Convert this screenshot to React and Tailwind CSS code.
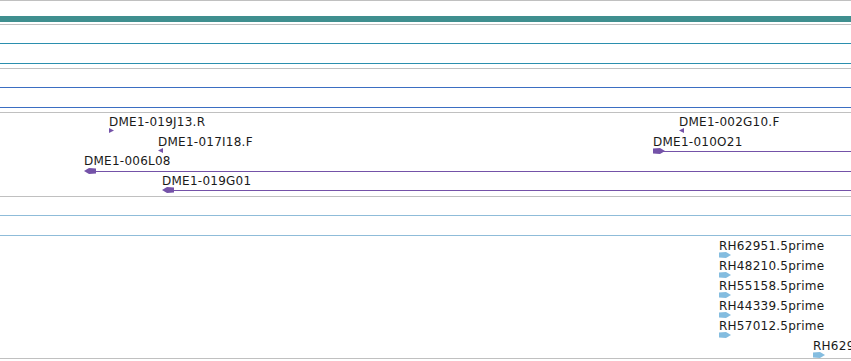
import React from 'react';

const PURPLE = '#7452a8';
const RH = '#84bde0';

function HeadLeft({ x, y }) {
  return (
    <svg className="absolute" style={{ left: x, top: y }} width="12" height="6" viewBox="0 0 12 6">
      <polygon points="0,3 5,0 12,0.5 12,5.5 5,6" fill={PURPLE} />
    </svg>
  );
}

function HeadRight({ x, y, color = PURPLE }) {
  return (
    <svg className="absolute" style={{ left: x, top: y }} width="12" height="6" viewBox="0 0 12 6">
      <polygon points="0,0.5 7,0 12,3 7,6 0,5.5" fill={color} />
    </svg>
  );
}

function Tri({ x, y, dir }) {
  const pts = dir === 'r' ? '0,0 5,2.5 0,5' : '5,0 0,2.5 5,5';
  return (
    <svg className="absolute" style={{ left: x, top: y }} width="5" height="5" viewBox="0 0 5 5">
      <polygon points={pts} fill={PURPLE} />
    </svg>
  );
}

function Label({ x, y, children }) {
  return (
    <div className="absolute text-[12px] leading-[14px] tracking-[0.25px] text-[#1a1a1a] whitespace-nowrap" style={{ left: x, top: y }}>
      {children}
    </div>
  );
}

function Line({ x, y }) {
  return <div className="absolute right-0 h-px bg-[#7452a8]" style={{ left: x, top: y }} />;
}

const rhRows = ['RH62951.5prime', 'RH48210.5prime', 'RH55158.5prime', 'RH44339.5prime', 'RH57012.5prime'];

export default function App() {
  return (
    <div className="w-[851px] h-[361px] bg-white overflow-hidden flex flex-col font-['DejaVu_Sans',sans-serif]">
      <div className="h-px bg-[#c0c0c0] shrink-0" />
      <div className="h-[15px] shrink-0" />
      <div className="h-[6px] bg-[#3f8f8f] shrink-0" />
      <div className="h-[2px] shrink-0" />
      <div className="h-px bg-[#c0c0c0] shrink-0" />
      <div className="h-[18px] shrink-0" />
      <div className="h-px bg-[#2b8fae] shrink-0" />
      <div className="h-[19px] shrink-0" />
      <div className="h-px bg-[#2b8fae] shrink-0" />
      <div className="h-[4px] shrink-0" />
      <div className="h-px bg-[#c0c0c0] shrink-0" />
      <div className="h-[18px] shrink-0" />
      <div className="h-px bg-[#3b6ec2] shrink-0" />
      <div className="h-[19px] shrink-0" />
      <div className="h-px bg-[#3b6ec2] shrink-0" />
      <div className="h-[4px] shrink-0" />
      <div className="h-px bg-[#c0c0c0] shrink-0" />

      {/* feature track */}
      <div className="relative h-[83px] shrink-0">
        <Label x={109} y={2}>DME1-019J13.R</Label>
        <Tri x={109} y={15} dir="r" />
        <Label x={158} y={22}>DME1-017I18.F</Label>
        <Tri x={158} y={35} dir="l" />
        <Label x={84} y={41}>DME1-006L08</Label>
        <Line x={94} y={58} />
        <HeadLeft x={84} y={55} />
        <Label x={162} y={61}>DME1-019G01</Label>
        <Line x={172} y={77} />
        <HeadLeft x={162} y={74} />

        <Label x={679} y={2}>DME1-002G10.F</Label>
        <Tri x={679} y={15} dir="l" />
        <Label x={653} y={22}>DME1-010O21</Label>
        <Line x={660} y={38} />
        <HeadRight x={653} y={35} />
      </div>

      <div className="h-px bg-[#c0c0c0] shrink-0" />
      <div className="h-[18px] shrink-0" />
      <div className="h-px bg-[#8fbcd9] shrink-0" />
      <div className="h-[19px] shrink-0" />
      <div className="h-px bg-[#8fbcd9] shrink-0" />

      {/* EST track */}
      <div className="relative h-[122px] shrink-0">
        {rhRows.map((name, i) => (
          <React.Fragment key={name}>
            <Label x={719} y={3 + i * 20}>{name}</Label>
            <HeadRight x={719} y={16 + i * 20} color={RH} />
          </React.Fragment>
        ))}
        <Label x={813} y={103}>RH62951.5prime</Label>
        <HeadRight x={813} y={116} color={RH} />
      </div>

      <div className="h-px bg-[#c0c0c0] shrink-0" />
    </div>
  );
}
